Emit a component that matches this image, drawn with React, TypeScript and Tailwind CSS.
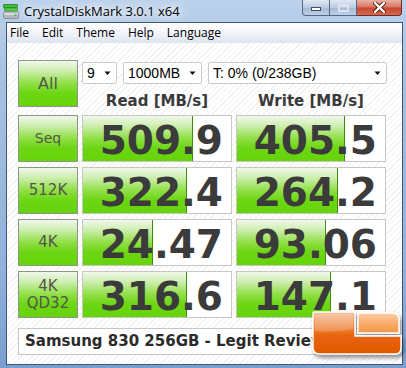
import React from 'react';

type Row = { label: string[]; read: string; readPct: number; write: string; writePct: number };

const rows: Row[] = [
  { label: ['Seq'], read: '509.9', readPct: 74.3, write: '405.5', writePct: 73 },
  { label: ['512K'], read: '322.4', readPct: 70, write: '264.2', writePct: 68.5 },
  { label: ['4K'], read: '24.47', readPct: 47.3, write: '93.06', writePct: 60.4 },
  { label: ['4K', 'QD32'], read: '316.6', readPct: 70, write: '147.1', writePct: 63.8 },
];

const greenFill =
  'bg-[linear-gradient(to_bottom,#f1f8ec_0%,#cdeeae_22%,#8fdf45_50%,#6cd612_72%,#66d40a_100%)]';

const LabelButton: React.FC<{ lines: string[]; big?: boolean }> = ({ lines, big }) => (
  <div
    className={`flex h-[47px] flex-col items-center justify-center border border-[#8d958d] ${greenFill} font-['DejaVu_Sans',sans-serif] leading-[17px] text-[#55554c] ${
      big ? 'text-[16px]' : lines[0] === 'Seq' ? 'text-[14px]' : 'text-[15px]'
    }`}
  >
    {lines.map((l) => (
      <span key={l}>{l}</span>
    ))}
  </div>
);

const ValueCell: React.FC<{ value: string; pct: number }> = ({ value, pct }) => (
  <div className="relative h-[47px] border border-[#c6c6c6] bg-white">
    <div
      className={`absolute inset-y-0 left-0 border-r border-[#3f8e14] ${greenFill}`}
      style={{ width: `${pct}%` }}
    />
    <div className="relative flex h-full items-center justify-end pr-[8px] pt-[3px] font-['DejaVu_Sans',sans-serif] text-[39px] font-bold leading-none text-[#3b3b3b]">
      {value}
    </div>
  </div>
);

const Combo: React.FC<{ text: string; width: string }> = ({ text, width }) => (
  <div
    className={`flex h-[22px] ${width} items-center justify-between rounded-[2px] border border-[#c9c9c9] bg-white pl-[4px] pr-[4px] font-['Liberation_Sans',sans-serif] text-[14px] text-black`}
  >
    <span>{text}</span>
    <svg width="8" height="5" viewBox="0 0 8 5">
      <path d="M0.5 0.5 H6.5 L3.5 4 Z" fill="#111" />
    </svg>
  </div>
);

const AppIcon = () => (
  <svg width="16" height="15" viewBox="0 0 16 15">
    <rect x="0.5" y="0.5" width="14" height="3" rx="0.5" fill="#3fbf3a" stroke="#1f7f1f" strokeWidth="0.8" />
    <rect x="1.5" y="4" width="13" height="3" rx="0.5" fill="#5bd24a" stroke="#2a8a25" strokeWidth="0.8" />
    <rect x="0.5" y="8" width="15" height="6.5" rx="1" fill="#d6d8dc" stroke="#7b8088" strokeWidth="0.8" />
    <rect x="1" y="11" width="14" height="3" fill="#b4b8be" />
    <circle cx="12.5" cy="11.2" r="1.1" fill="#39c639" />
  </svg>
);

const Logo = () => (
  <svg width="100" height="60" viewBox="0 0 100 60" className="absolute left-[306px] top-[307px]">
    <defs>
      <linearGradient id="lgBig" x1="0" y1="0" x2="0" y2="1">
        <stop offset="0" stopColor="#f5c29e" />
        <stop offset="0.35" stopColor="#ee8b45" />
        <stop offset="0.55" stopColor="#e8650d" />
        <stop offset="1" stopColor="#e05800" />
      </linearGradient>
      <linearGradient id="lgSmall" x1="0" y1="0" x2="0" y2="1">
        <stop offset="0" stopColor="#fcd0a8" />
        <stop offset="0.5" stopColor="#f8ad6c" />
        <stop offset="1" stopColor="#f39443" />
      </linearGradient>
      <filter id="sh" x="-10%" y="-10%" width="130%" height="140%">
        <feDropShadow dx="2" dy="3" stdDeviation="2" floodColor="#000" floodOpacity="0.45" />
      </filter>
    </defs>
    <g filter="url(#sh)">
      <path
        d="M8 5 H49 V29 H95 V41 Q95 47 89 47 H14 Q7 47 7 40 V6 Q7 5 8 5 Z"
        fill="url(#lgBig)"
        stroke="#ffffff"
        strokeWidth="1.4"
      />
      <path d="M52 6 H86 Q93 6 93 13 V26 H52 Z" fill="url(#lgSmall)" stroke="#ffffff" strokeWidth="1.4" />
    </g>
    <path d="M9 7 H47 V22 Q28 26 9 24 Z" fill="#ffffff" opacity="0.18" />
  </svg>
);

const App: React.FC = () => {
  return (
    <div className="relative flex h-[368px] w-[406px] flex-col overflow-hidden bg-[linear-gradient(to_bottom,#bcd2ec_0%,#a6c1e2_20%,#93b3db_70%,#7a9ecf_100%)]">
      {/* title bar */}
      <div className="flex h-[22px] shrink-0">
        <div className="ml-[3px] mt-[4px]">
          <AppIcon />
        </div>
        <div className="ml-[5px] mt-[2px] font-['Open_Sans',sans-serif] text-[13px] leading-[18px] text-black [text-shadow:0_0_6px_#ffffff,0_0_10px_#ffffff,0_0_14px_#ffffff]">
          CrystalDiskMark 3.0.1 x64
        </div>
        <div className="ml-auto mr-[4px] flex h-[16px]">
          <div className="flex w-[28px] items-end justify-center rounded-bl-[4px] border border-t-0 border-[#50688a] bg-[linear-gradient(to_bottom,#dfe8f4,#bccbe0_50%,#a5b9d4_52%,#bdd0e6)] pb-[4px]">
            <div className="h-[4px] w-[10px] border border-[#3d4e66] bg-white" />
          </div>
          <div className="flex w-[27px] items-center justify-center border border-l-0 border-t-0 border-[#50688a] bg-[linear-gradient(to_bottom,#dfe8f4,#bccbe0_50%,#a5b9d4_52%,#bdd0e6)] pt-[1px]">
            <div className="h-[8px] w-[11px] border-2 border-t-[3px] border-[#dae3ef]" />
          </div>
          <div className="flex w-[45px] items-center justify-center rounded-br-[4px] border border-l-0 border-t-0 border-[#6e2b20] bg-[linear-gradient(to_bottom,#e9b2a4,#d77660_48%,#c7452d_52%,#d46b52)]">
            <svg width="13" height="11" viewBox="0 0 13 11">
              <path d="M2 1 L11 10 M11 1 L2 10" stroke="#4a1a12" strokeWidth="4" strokeLinecap="round" />
              <path d="M2 1 L11 10 M11 1 L2 10" stroke="#ffffff" strokeWidth="2.4" strokeLinecap="round" />
            </svg>
          </div>
        </div>
      </div>

      {/* client area */}
      <div className="mb-[3px] ml-[6px] mr-[3px] flex flex-1 flex-col border border-[#3e5676] bg-white">
        <div className="flex h-[20px] shrink-0 items-center gap-[13px] border-b border-[#dfe4ee] bg-[linear-gradient(to_bottom,#ffffff,#f3f5fa_50%,#dfe5f2)] pl-[3px] pt-[1px] font-['Open_Sans',sans-serif] text-[12px] text-black">
          <span>File</span>
          <span>Edit</span>
          <span>Theme</span>
          <span>Help</span>
          <span>Language</span>
        </div>

        <div className="flex flex-1 flex-col bg-[repeating-linear-gradient(135deg,#ffffff_0px,#ffffff_3px,#f1f1f1_3px,#f1f1f1_4px)] pl-[11px] pt-[17px]">
          <div className="flex gap-[4px]">
            <div className="w-[60px]">
              <LabelButton lines={['All']} big />
            </div>
            <div className="flex w-[305px] flex-col pt-[2px]">
              <div className="flex gap-[6px]">
                <Combo text="9" width="w-[35px]" />
                <Combo text="1000MB" width="w-[79px]" />
                <Combo text="T: 0% (0/238GB)" width="w-[179px]" />
              </div>
              <div className="mt-[8px] grid grid-cols-[150px_150px] gap-x-[4px] font-['DejaVu_Sans',sans-serif] text-[15px] font-bold leading-[18px] text-[#3a3a3a]">
                <div className="text-center">Read [MB/s]</div>
                <div className="text-center">Write [MB/s]</div>
              </div>
            </div>
          </div>

          <div className="mt-[5px] grid grid-cols-[60px_150px_150px] gap-x-[4px] gap-y-[5px]">
            {rows.map((r) => (
              <React.Fragment key={r.label.join('-')}>
                <LabelButton lines={r.label} />
                <ValueCell value={r.read} pct={r.readPct} />
                <ValueCell value={r.write} pct={r.writePct} />
              </React.Fragment>
            ))}
          </div>

          <div className="mt-[10px] flex h-[27px] w-[368px] items-center overflow-hidden border border-[#c6c6c6] bg-white pl-[6px] font-['DejaVu_Sans',sans-serif] text-[15px] font-bold whitespace-nowrap text-[#2b2b2b]">
            Samsung 830 256GB - Legit Reviews
          </div>
        </div>
      </div>

      <Logo />
    </div>
  );
};

export default App;
